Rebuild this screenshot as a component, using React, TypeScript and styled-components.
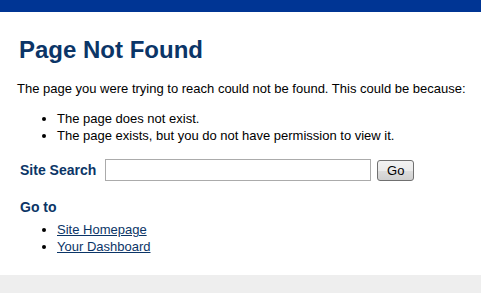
import React from "react";
import styled, { createGlobalStyle } from "styled-components";

const Global = createGlobalStyle`
  html, body { margin: 0; padding: 0; background: #ffffff; }
  body { font-family: "Liberation Sans", Arial, sans-serif; color: #000; }
`;

const Page = styled.div`
  display: flex;
  flex-direction: column;
  min-height: 293px;
`;

const TopBar = styled.div`
  height: 12px;
  background: #003594;
`;

const Main = styled.main`
  flex: 1;
  padding: 24px 8px 20px 17px;
`;

const Heading = styled.h1`
  margin: 0 0 16px 2px;
  font-size: 24px;
  line-height: 28px;
  font-weight: bold;
  color: #0b3567;
`;

const Para = styled.p`
  margin: 0 0 13px 0;
  font-size: 13px;
  line-height: 17px;
  white-space: nowrap;
`;

const List = styled.ul`
  margin: 0;
  padding-left: 40px;
  font-size: 13px;
  line-height: 17px;
`;

const SearchRow = styled.form`
  display: flex;
  align-items: center;
  margin: 15px 0 0 3px;
  height: 22px;
`;

const Label = styled.label`
  font-size: 14px;
  line-height: 17px;
  font-weight: bold;
  color: #0b3567;
  margin-right: 9px;
`;

const Input = styled.input`
  box-sizing: border-box;
  width: 266px;
  height: 22px;
  border: 1px solid #ababab;
  margin: 0 6px 0 0;
  padding: 0 3px;
  font: 13px "Liberation Sans", Arial, sans-serif;
`;

const Button = styled.button`
  box-sizing: border-box;
  width: 37px;
  height: 21px;
  margin-top: 1px;
  padding: 0;
  border: 1px solid #707070;
  border-radius: 3px;
  background: linear-gradient(#f2f2f2 0%, #ebebeb 50%, #dddddd 51%, #cfcfcf 100%);
  font: 13px "Liberation Sans", Arial, sans-serif;
  color: #000;
`;

const SubHeading = styled.h2`
  margin: 18px 0 5px 3px;
  font-size: 14px;
  line-height: 17px;
  font-weight: bold;
  color: #0b3567;
`;

const Link = styled.a`
  color: #0b3567;
  text-decoration: underline;
`;

const Footer = styled.footer`
  height: 18px;
  background: #eeeeee;
`;

export default function App() {
  return (
    <Page>
      <Global />
      <TopBar />
      <Main>
        <Heading>Page Not Found</Heading>
        <Para>The page you were trying to reach could not be found. This could be because:</Para>
        <List>
          <li>The page does not exist.</li>
          <li>The page exists, but you do not have permission to view it.</li>
        </List>
        <SearchRow onSubmit={(e) => e.preventDefault()}>
          <Label htmlFor="q">Site Search</Label>
          <Input id="q" type="text" />
          <Button type="submit">Go</Button>
        </SearchRow>
        <SubHeading>Go to</SubHeading>
        <List>
          <li><Link href="#">Site Homepage</Link></li>
          <li><Link href="#">Your Dashboard</Link></li>
        </List>
      </Main>
      <Footer />
    </Page>
  );
}
